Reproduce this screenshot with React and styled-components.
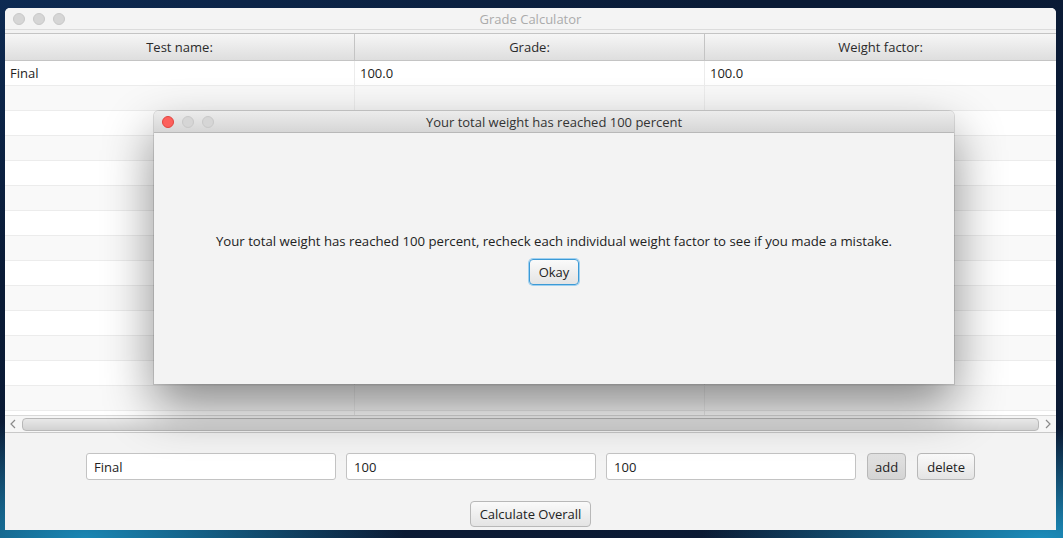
import React from 'react';
import styled, {createGlobalStyle} from 'styled-components';

const GlobalStyle = createGlobalStyle`
  html, body {
    margin: 0;
    padding: 0;
    width: 100%;
    height: 100%;
  }
  body {
    font-family: "Open Sans", "Liberation Sans", Arial, sans-serif;
    font-size: 13px;
    color: #333;
  }
`;

const Desktop = styled.div`
  position: relative;
  width: 1063px;
  height: 538px;
  overflow: hidden;
  box-sizing: border-box;
  padding: 8px 7px 8px 5px;
  background:
    radial-gradient(ellipse 320px 120px at 8% 100%, #1a86b3 0%, rgba(26,134,179,0) 100%),
    radial-gradient(ellipse 340px 110px at 98% 100%, #1c8cba 0%, rgba(28,140,186,0) 100%),
    linear-gradient(160deg, #0d2a52 0%, #0a1b36 30%, #0b1a33 100%);
`;

const Window = styled.div`
  height: 522px;
  display: flex;
  flex-direction: column;
  background: #f2f2f2;
  border-radius: 5px 5px 0 0;
  overflow: hidden;
`;

const TitleBar = styled.div`
  position: relative;
  height: 21px;
  flex: none;
  display: flex;
  align-items: center;
  justify-content: center;
  background: ${({active}) => active
    ? 'linear-gradient(#ececec, #d6d6d6)'
    : '#f4f4f4'};
  border-bottom: 1px solid ${({active}) => active ? '#b8b8b8' : '#dcdcdc'};
  color: ${({active}) => active ? '#333' : '#ababab'};
  font-size: 13px;
`;

const Lights = styled.div`
  position: absolute;
  left: 8px;
  top: 5px;
  display: flex;
  gap: 8px;
`;

const Light = styled.span`
  width: 12px;
  height: 12px;
  border-radius: 50%;
  box-sizing: border-box;
  background: ${({color}) => color || '#d6d6d6'};
  border: 1px solid ${({color}) => color ? '#e0443e' : '#c8c8c8'};
`;

const Table = styled.div`
  margin-top: 3px;
  flex: 1;
  display: flex;
  flex-direction: column;
  border-top: 1px solid #c4c4c4;
  background: #fff;
  overflow: hidden;
`;

const HeaderRow = styled.div`
  display: grid;
  grid-template-columns: 350px 350px 1fr;
  height: 26px;
  flex: none;
  border-bottom: 1px solid #c4c4c4;
  background: linear-gradient(#f6f6f6, #dedede);
`;

const HeaderCell = styled.div`
  display: flex;
  align-items: center;
  justify-content: center;
  border-right: 1px solid #c4c4c4;
  color: #2a2a2a;
  &:last-child { border-right: none; }
`;

const Body = styled.div`
  flex: 1;
  overflow: hidden;
`;

const Row = styled.div`
  display: grid;
  grid-template-columns: 350px 350px 1fr;
  height: 25px;
  box-sizing: border-box;
  border-bottom: 1px solid #ececec;
  background: ${({odd}) => odd ? '#f9f9f9' : '#fff'};
`;

const Cell = styled.div`
  display: flex;
  align-items: center;
  padding-left: 5px;
  border-right: 1px solid #ececec;
  color: #222;
  &:last-child { border-right: none; }
`;

const ScrollBar = styled.div`
  height: 16px;
  flex: none;
  display: flex;
  align-items: center;
  gap: 4px;
  padding: 0 3px;
  background: #f6f6f6;
  border-top: 1px solid #d8d8d8;
  border-bottom: 1px solid #c8c8c8;
  color: #8a8a8a;
`;

const Arrow = styled.span`
  width: 10px;
  display: flex;
  justify-content: center;
`;

const Thumb = styled.div`
  flex: 1;
  height: 11px;
  border: 1px solid #b8b8b8;
  border-radius: 4px;
  background: linear-gradient(#e8e8e8, #d2d2d2);
`;

const Controls = styled.div`
  height: 97px;
  flex: none;
  display: flex;
  flex-direction: column;
  align-items: center;
  padding-top: 20px;
  box-sizing: border-box;
  gap: 21px;
  background: #f3f3f3;
`;

const InputRow = styled.div`
  display: flex;
  align-items: center;
  gap: 10px;
`;

const Field = styled.input`
  width: 250px;
  height: 27px;
  box-sizing: border-box;
  border: 1px solid #c3c3c3;
  border-radius: 3px;
  padding: 0 7px;
  font-family: inherit;
  font-size: 13px;
  color: #222;
  background: #fff;
  outline: none;
`;

const Button = styled.button`
  height: ${({tall}) => tall ? '26px' : '27px'};
  padding: 0 ${({wide}) => wide ? '9px' : '7px'};
  margin-left: ${({spaced}) => spaced ? '1px' : '0'};
  box-sizing: border-box;
  font-family: inherit;
  font-size: 13px;
  color: #222;
  border-radius: 4px;
  border: 1px solid ${({focus}) => focus ? '#3c9ad6' : '#b8b8b8'};
  box-shadow: ${({focus}) => focus ? '0 0 0 1px #9fd0f0' : 'none'};
  background: ${({pressed}) => pressed
    ? 'linear-gradient(#e2e2e2, #d4d4d4)'
    : 'linear-gradient(#fafafa, #e4e4e4)'};
`;

const Dialog = styled.div`
  position: absolute;
  left: 154px;
  top: 111px;
  width: 800px;
  height: 273px;
  display: flex;
  flex-direction: column;
  background: #f3f3f3;
  border-radius: 5px 5px 0 0;
  box-shadow: 0 22px 50px rgba(0,0,0,0.45), 0 0 0 1px rgba(0,0,0,0.12);
  overflow: hidden;
`;

const DialogBody = styled.div`
  flex: 1;
  display: flex;
  flex-direction: column;
  align-items: center;
  padding-top: 99px;
  gap: 9px;
  color: #222;
  font-size: 13.2px;
`;

const rows = Array.from({length: 15});

const App = () => {
  return(
    <Desktop>
      <GlobalStyle />
      <Window>
        <TitleBar>
          <Lights>
            <Light /><Light /><Light />
          </Lights>
          Grade Calculator
        </TitleBar>
        <Table>
          <HeaderRow>
            <HeaderCell>Test name:</HeaderCell>
            <HeaderCell>Grade:</HeaderCell>
            <HeaderCell>Weight factor:</HeaderCell>
          </HeaderRow>
          <Body>
            {rows.map((_, i) => (
              <Row key={i} odd={i % 2 === 1}>
                <Cell>{i === 0 ? 'Final' : ''}</Cell>
                <Cell>{i === 0 ? '100.0' : ''}</Cell>
                <Cell>{i === 0 ? '100.0' : ''}</Cell>
              </Row>
            ))}
          </Body>
          <ScrollBar>
            <Arrow>
              <svg width="6" height="10" viewBox="0 0 6 10"><path d="M5 1L1 5l4 4" fill="none" stroke="#8a8a8a" strokeWidth="1.2"/></svg>
            </Arrow>
            <Thumb />
            <Arrow>
              <svg width="6" height="10" viewBox="0 0 6 10"><path d="M1 1l4 4-4 4" fill="none" stroke="#8a8a8a" strokeWidth="1.2"/></svg>
            </Arrow>
          </ScrollBar>
        </Table>
        <Controls>
          <InputRow>
            <Field defaultValue="Final" />
            <Field defaultValue="100" />
            <Field defaultValue="100" />
            <Button pressed spaced>add</Button>
            <Button wide spaced>delete</Button>
          </InputRow>
          <Button tall wide>Calculate Overall</Button>
        </Controls>
      </Window>
      <Dialog>
        <TitleBar active>
          <Lights>
            <Light color="#fc605c" /><Light /><Light />
          </Lights>
          Your total weight has reached 100 percent
        </TitleBar>
        <DialogBody>
          <div>Your total weight has reached 100 percent, recheck each individual weight factor to see if you made a mistake.</div>
          <Button focus tall wide>Okay</Button>
        </DialogBody>
      </Dialog>
    </Desktop>
  )
};

export default App;
